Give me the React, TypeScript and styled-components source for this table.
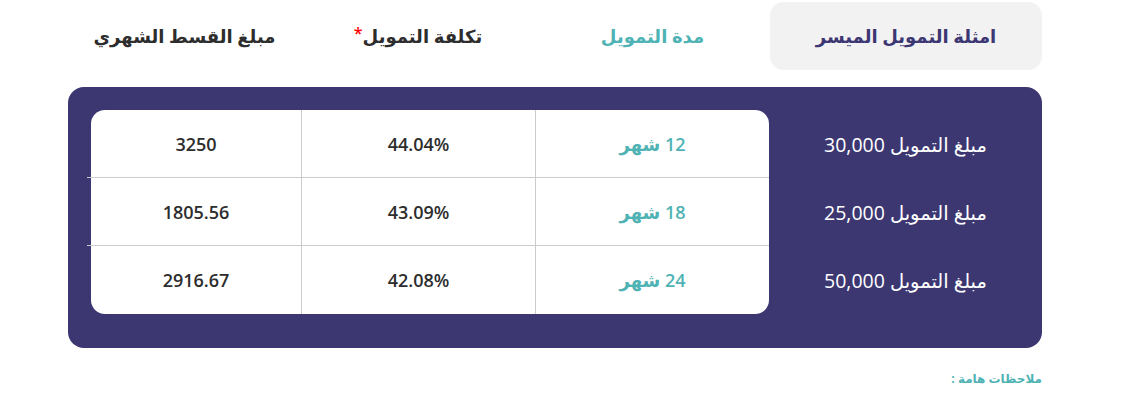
import React, { FC } from "react";
import styled, { createGlobalStyle } from "styled-components";

const GlobalStyle = createGlobalStyle`
  body {
    margin: 0;
    background: #ffffff;
    font-family: "Open Sans", "DejaVu Sans", sans-serif;
  }
`;

const Page = styled.div`
  direction: rtl;
  width: 974px;
  margin-left: 68px;
  padding-top: 2px;
`;

const HeaderRow = styled.div`
  display: grid;
  grid-template-columns: 272px 235px 234px 233px;
  height: 68px;
`;

const HeaderCell = styled.div<{ $active?: boolean; $teal?: boolean }>`
  display: flex;
  align-items: center;
  justify-content: center;
  border-radius: 14px;
  background: ${(p) => (p.$active ? "#f2f2f3" : "transparent")};
  color: ${(p) => (p.$active ? "#3c3672" : p.$teal ? "#4fb3b5" : "#2d2d2d")};
  font-size: 18px;
  font-weight: 600;
`;

const Star = styled.span`
  color: #ff0000;
  font-size: 16px;
  align-self: flex-start;
  margin-top: 20px;
`;

const Panel = styled.div`
  display: flex;
  margin-top: 17px;
  background: #3c3771;
  border-radius: 16px;
  padding: 23px 0 34px 23px;
`;

const Labels = styled.div`
  width: 273px;
  display: flex;
  flex-direction: column;
`;

const Label = styled.div`
  height: 68px;
  display: flex;
  align-items: center;
  justify-content: center;
  color: #ffffff;
  font-size: 19.5px;
`;

const DataTable = styled.div`
  flex: 1;
  background: #ffffff;
  border-radius: 14px;
`;

const Row = styled.div<{ $last?: boolean }>`
  position: relative;
  display: grid;
  grid-template-columns: 234px 234px 210px;
  height: 68px;
  border-bottom: ${(p) => (p.$last ? "none" : "1px solid #cccccc")};
  box-sizing: border-box;

  &::after {
    content: "";
    display: ${(p) => (p.$last ? "none" : "block")};
    position: absolute;
    left: -4px;
    bottom: -1px;
    width: 4px;
    height: 1px;
    background: #cccccc;
  }
`;

const Cell = styled.div<{ $teal?: boolean; $end?: boolean }>`
  display: flex;
  align-items: center;
  justify-content: center;
  border-left: ${(p) => (p.$end ? "none" : "1px solid #cccccc")};
  color: ${(p) => (p.$teal ? "#4fb3b5" : "#2d2d2d")};
  font-size: 18px;
  font-weight: 600;
`;

const Notes = styled.div`
  margin-top: 22px;
  color: #4fb3b5;
  font-size: 12px;
  font-weight: 700;
`;

interface Example {
  amount: string;
  months: string;
  cost: string;
  installment: string;
}

const examples: Example[] = [
  { amount: "30,000", months: "12", cost: "44.04%", installment: "3250" },
  { amount: "25,000", months: "18", cost: "43.09%", installment: "1805.56" },
  { amount: "50,000", months: "24", cost: "42.08%", installment: "2916.67" },
];

const App: FC = () => {
  return (
    <>
      <GlobalStyle />
      <Page>
        <HeaderRow>
          <HeaderCell $active>امثلة التمويل الميسر</HeaderCell>
          <HeaderCell $teal>مدة التمويل</HeaderCell>
          <HeaderCell>
            تكلفة التمويل<Star>*</Star>
          </HeaderCell>
          <HeaderCell>مبلغ القسط الشهري</HeaderCell>
        </HeaderRow>
        <Panel>
          <Labels>
            {examples.map((e) => (
              <Label key={e.amount}>مبلغ التمويل {e.amount}</Label>
            ))}
          </Labels>
          <DataTable>
            {examples.map((e, i) => (
              <Row key={e.amount} $last={i === examples.length - 1}>
                <Cell $teal>{e.months} شهر</Cell>
                <Cell>
                  <bdi>{e.cost}</bdi>
                </Cell>
                <Cell $end>{e.installment}</Cell>
              </Row>
            ))}
          </DataTable>
        </Panel>
        <Notes>ملاحظات هامة :</Notes>
      </Page>
    </>
  );
};

export default App;
